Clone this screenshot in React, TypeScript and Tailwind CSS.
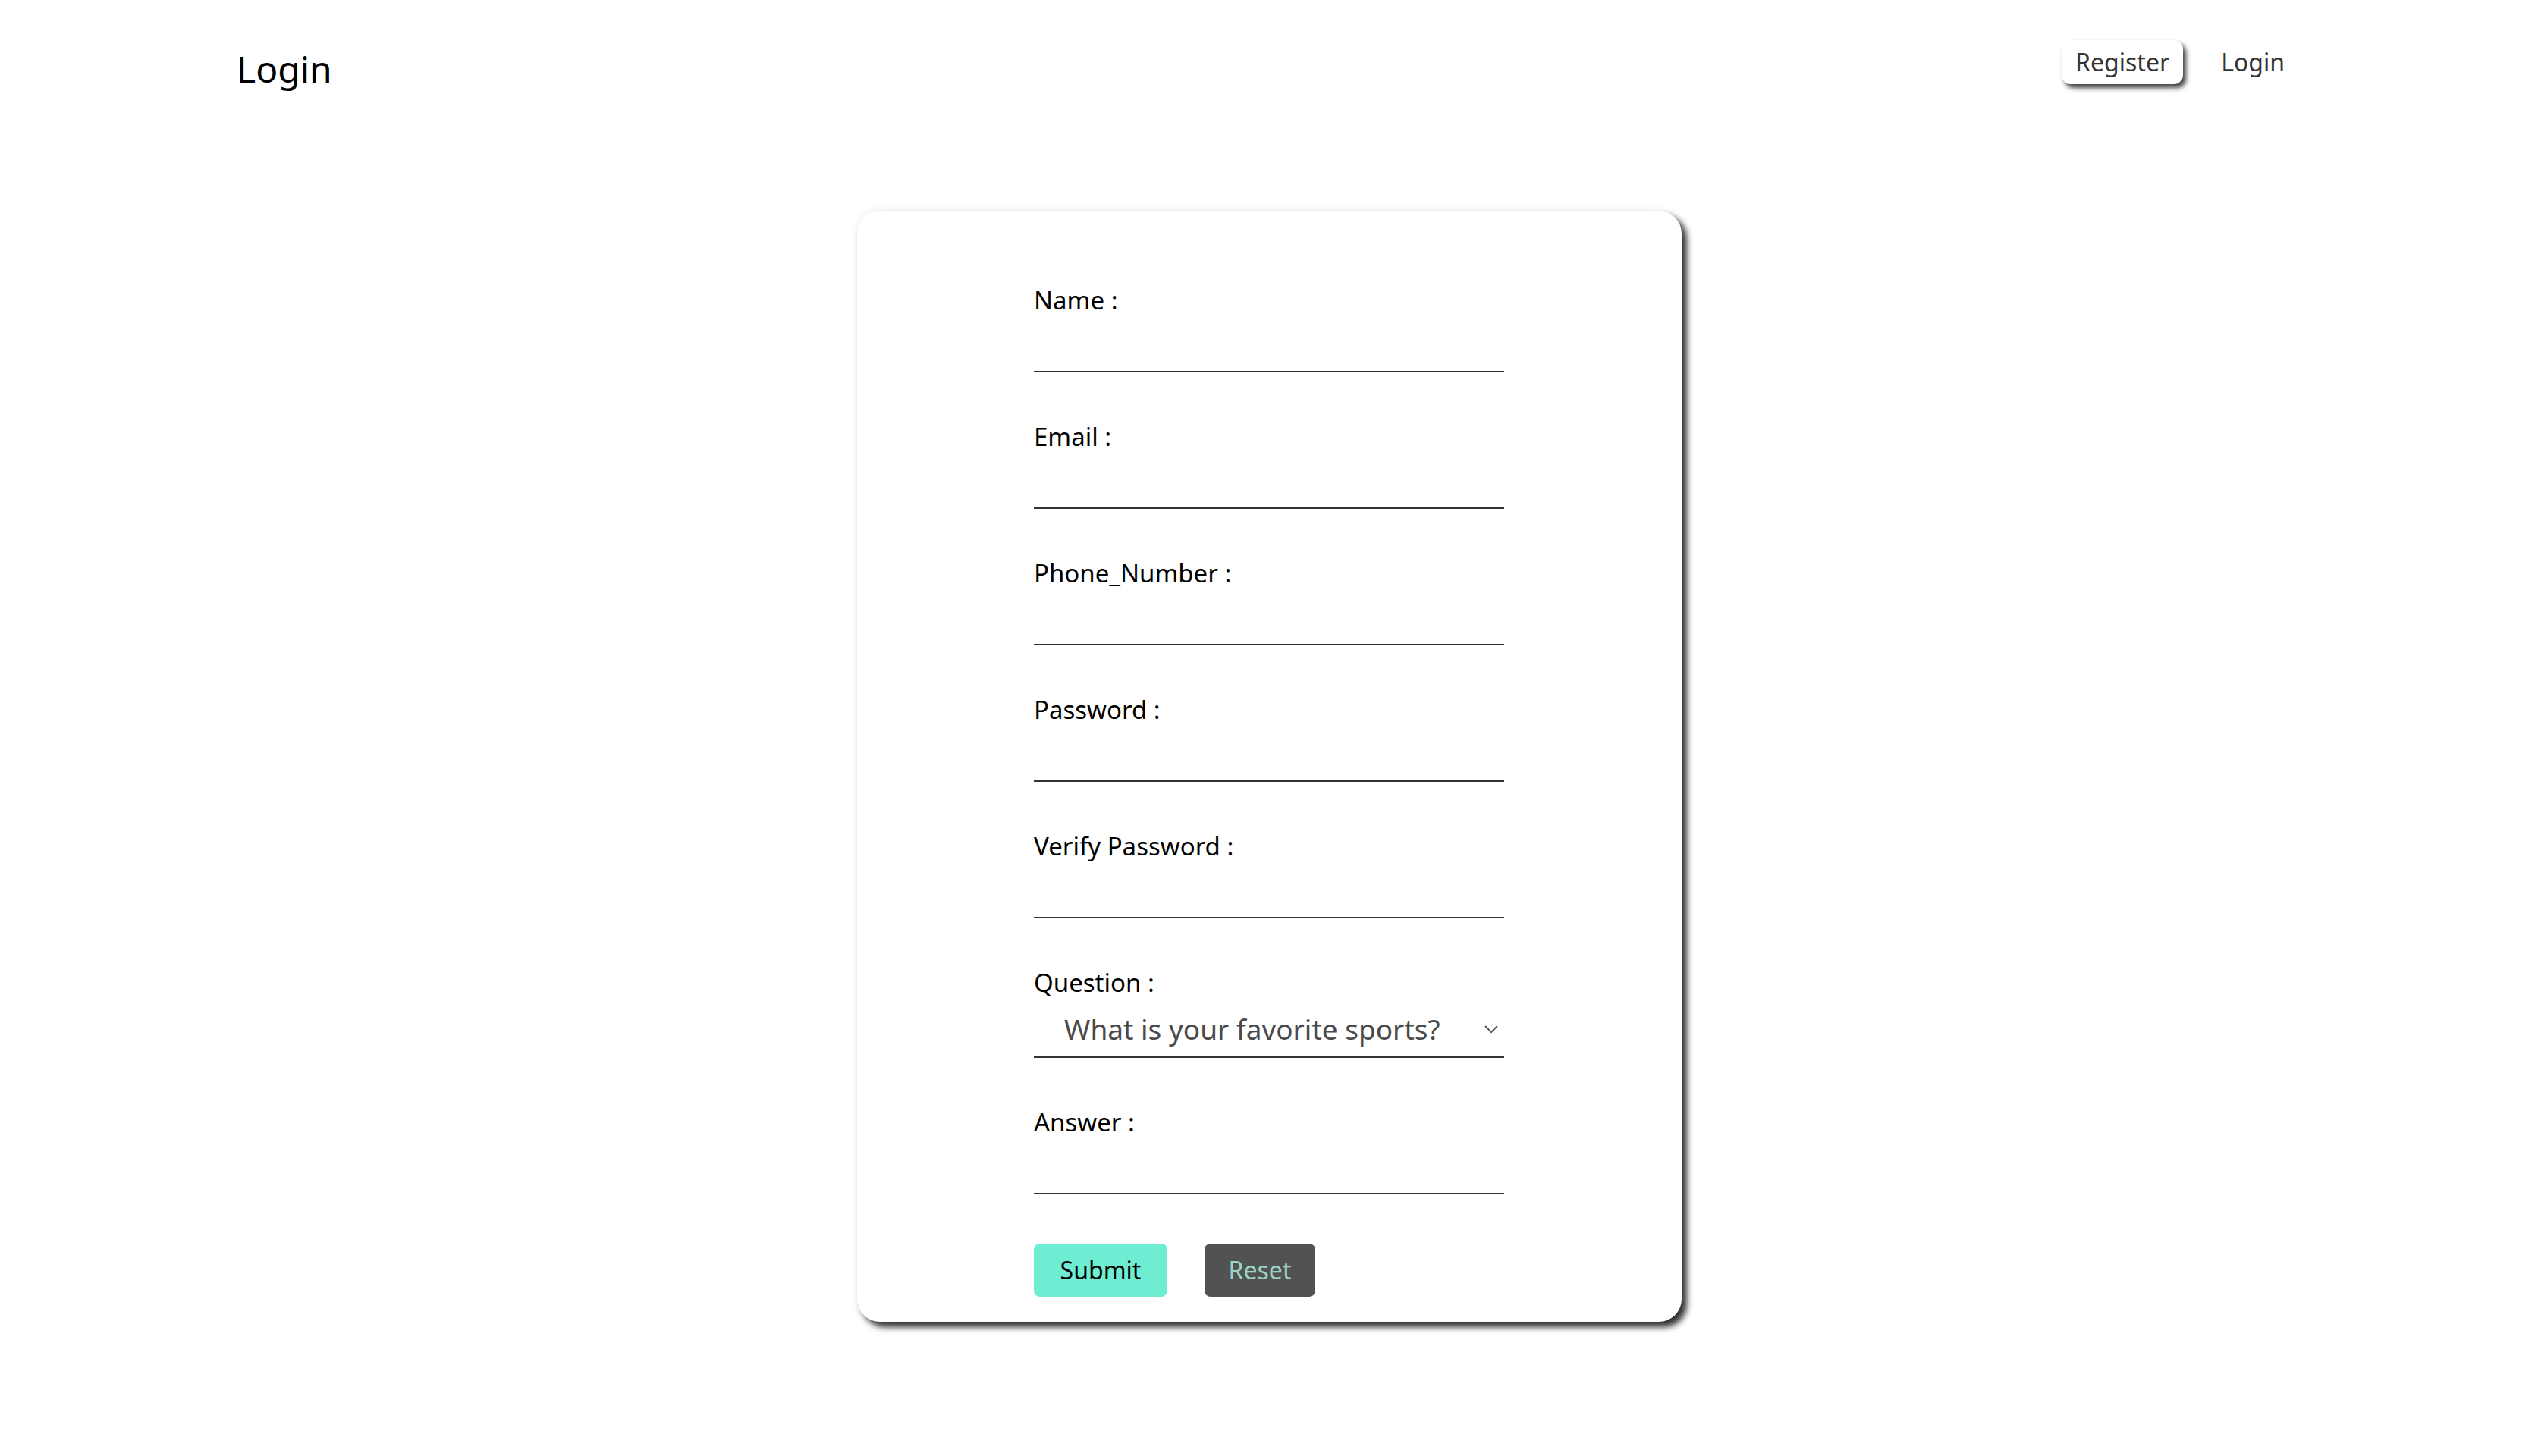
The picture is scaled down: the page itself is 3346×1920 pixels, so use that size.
import React, { useState } from "react";

const fields = [
  { name: "name", label: "Name :", type: "text" },
  { name: "email", label: "Email :", type: "email" },
  { name: "phone", label: "Phone_Number :", type: "text" },
  { name: "password", label: "Password :", type: "password" },
  { name: "verify", label: "Verify Password :", type: "password" },
];

const App: React.FC = () => {
  const [question, setQuestion] = useState("sports");

  return (
    <div className="min-h-screen bg-white text-black" style={{ fontFamily: '"Noto Sans", "Open Sans", sans-serif' }}>
      {/* header */}
      <header className="flex items-start justify-between pl-[312px] pr-[334px] pt-[53px]">
        <h1 className="text-[48px] leading-[72px] font-normal mt-[2px]">Login</h1>
        <nav className="flex items-center gap-[50px]">
          <button className="h-[58px] px-[18px] rounded-[12px] bg-white text-[#333] text-[32px] shadow-[4px_5px_6px_rgba(0,0,0,0.75)]">
            Register
          </button>
          <a className="text-[32px] text-[#333] cursor-pointer">Login</a>
        </nav>
      </header>

      {/* form card */}
      <div className="mx-auto mt-[151px] w-[1087px] rounded-[30px] bg-white pt-[92px] pb-[33px] shadow-[0_0_12px_rgba(0,0,0,0.08),7px_7px_8px_rgba(0,0,0,0.8)]">
        <form className="mx-auto flex w-[620px] flex-col gap-[59px]" onSubmit={(e) => e.preventDefault()}>
          {fields.map((f) => (
            <div key={f.name} className="flex flex-col">
              <label className="text-[33px] leading-[51px]">{f.label}</label>
              <input
                type={f.type}
                className="h-[70px] w-full border-0 border-b-2 border-[#333] bg-transparent text-[33px] outline-none"
              />
            </div>
          ))}

          <div className="flex flex-col">
            <label className="text-[33px] leading-[51px]">Question :</label>
            <div className="relative">
              <select
                value={question}
                onChange={(e) => setQuestion(e.target.value)}
                className="h-[74px] w-full appearance-none border-0 border-b-2 border-[#333] bg-transparent pl-[40px] text-[37px] text-[#4a4a4a] outline-none"
              >
                <option value="sports">What is your favorite sports?</option>
                <option value="food">What is your favorite food?</option>
                <option value="pet">What is your first pet's name?</option>
              </select>
              <svg
                className="pointer-events-none absolute right-[8px] top-[30px] h-[12px] w-[18px]"
                viewBox="0 0 18 12"
                fill="none"
                stroke="#555"
                strokeWidth="2"
              >
                <path d="M1 2 L9 10 L17 2" />
              </svg>
            </div>
          </div>

          <div className="flex flex-col">
            <label className="text-[33px] leading-[51px]">Answer :</label>
            <input type="text" className="h-[70px] w-full border-0 border-b-2 border-[#333] bg-transparent text-[33px] outline-none" />
          </div>

          <div className="mt-[6px] flex gap-[49px]">
            <button type="submit" className="h-[70px] w-[176px] rounded-[8px] bg-[#6eedd3] text-[32px] text-black">
              Submit
            </button>
            <button type="reset" className="h-[70px] w-[146px] rounded-[8px] bg-[#525252] text-[32px] text-[#9dd3c4]">
              Reset
            </button>
          </div>
        </form>
      </div>
    </div>
  );
};

export default App;
